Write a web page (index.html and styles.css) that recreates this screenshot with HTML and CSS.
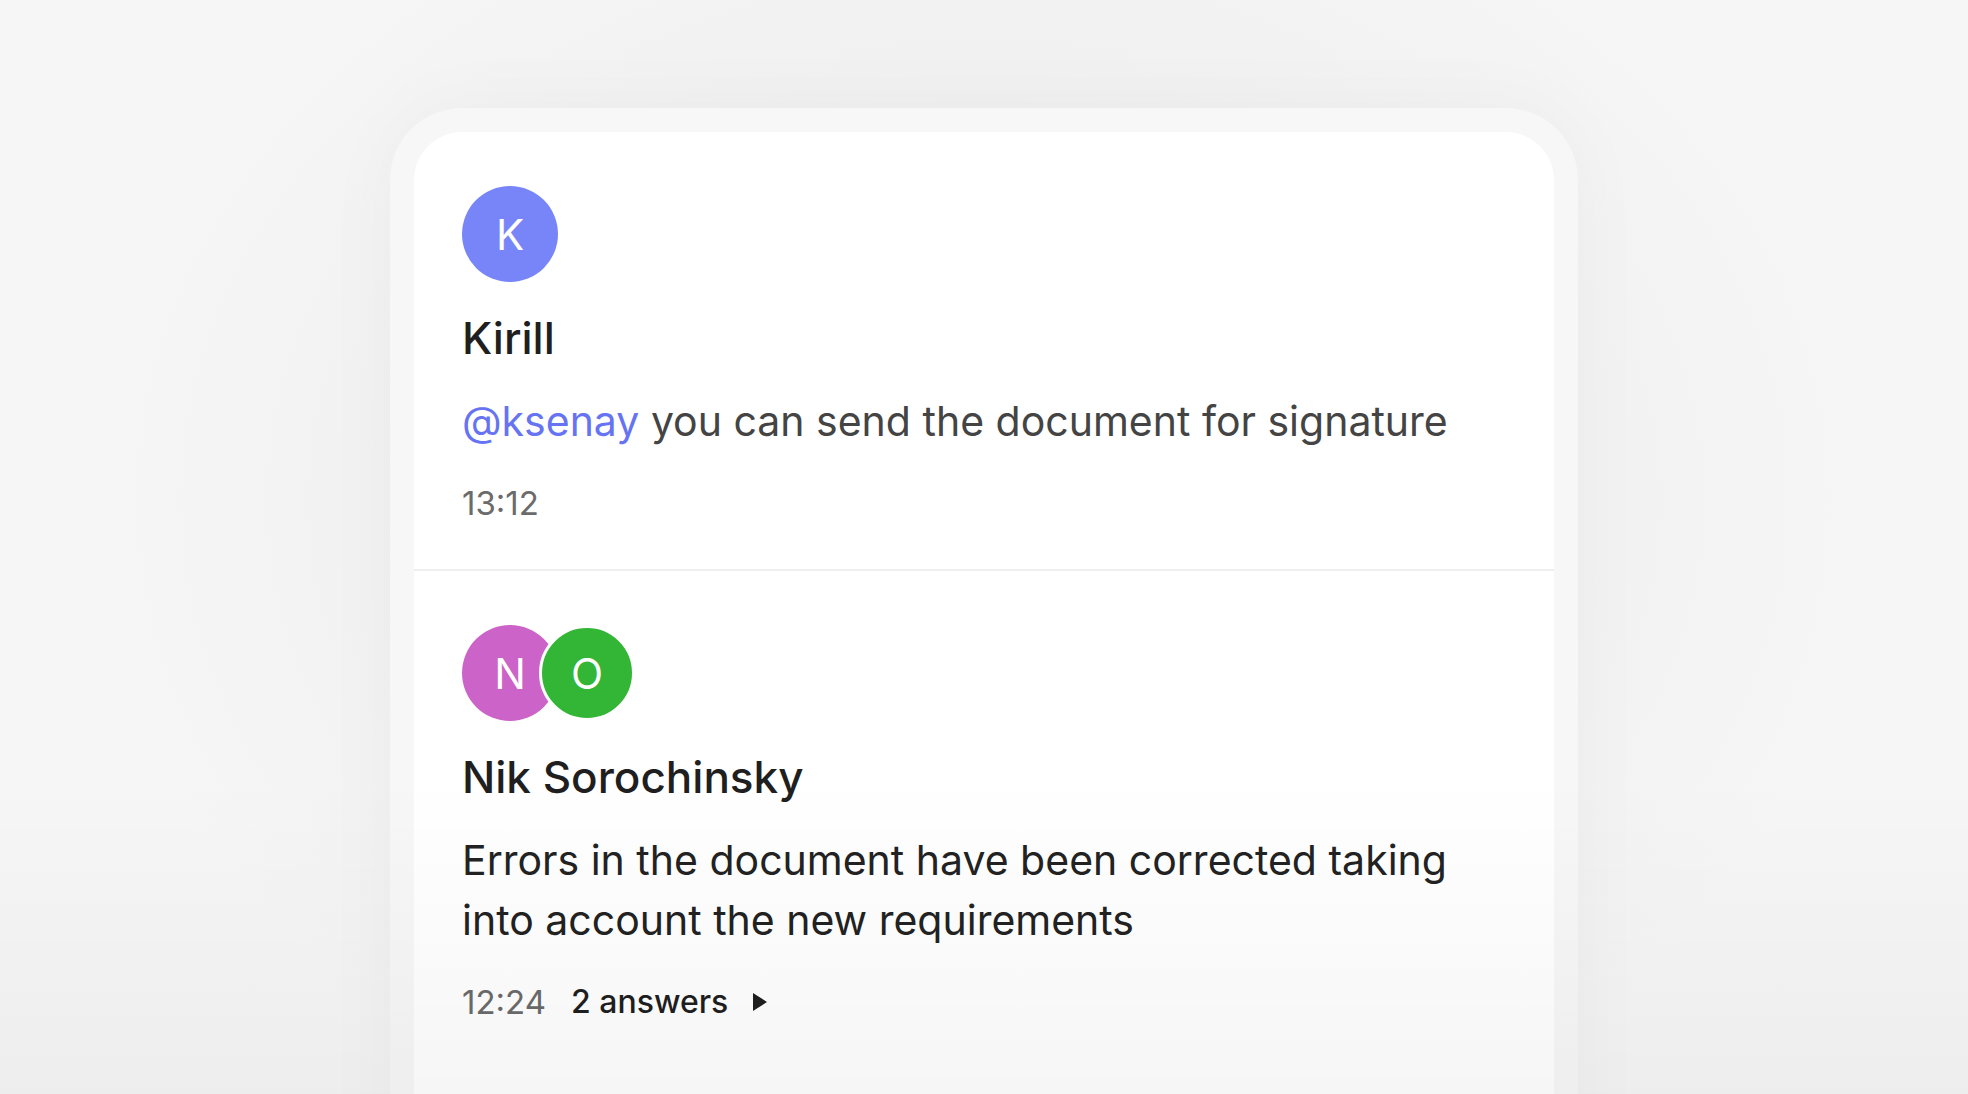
FILE: index.html
```html
<!DOCTYPE html>
<html lang="en">
<head>
<meta charset="utf-8">
<title>Comments</title>
<link rel="stylesheet" href="styles.css">
</head>
<body>
<div class="stage">
  <div class="frame">
    <div class="card">
      <div class="item">
        <div class="avatars">
          <div class="avatar avatar-k">K</div>
        </div>
        <div class="name">Kirill</div>
        <div class="message read"><span class="mention">@ksenay</span> you can send the document for signature</div>
        <div class="meta"><span class="time">13:12</span></div>
      </div>
      <div class="item">
        <div class="avatars">
          <div class="avatar avatar-n">N</div>
          <div class="avatar avatar-o">O</div>
        </div>
        <div class="name">Nik Sorochinsky</div>
        <div class="message">Errors in the document have been corrected taking<br>into account the new requirements</div>
        <div class="meta">
          <span class="time">12:24</span>
          <span class="answers">2 answers</span>
          <svg class="arrow" width="16" height="20" viewBox="0 0 16 20"><path d="M1 1 L15 10 L1 19 Z" fill="#1f1f1f"/></svg>
        </div>
      </div>
    </div>
  </div>
  <div class="fade"></div>
</div>
</body>
</html>
```

FILE: styles.css
```css
html, body {
  margin: 0;
  padding: 0;
  height: 100%;
}
body {
  overflow: hidden;
  background: #f3f3f3;
  font-family: Inter, "Noto Sans", sans-serif;
}
.stage {
  position: relative;
  height: 100vh;
  overflow: hidden;
  padding-top: 108px;
  box-sizing: border-box;
  background: radial-gradient(ellipse 900px 700px at 984px 500px, #ebebeb 0%, #f0f0f0 55%, #f6f6f6 100%);
}
.frame {
  width: 1188px;
  margin: 0 auto;
  box-sizing: border-box;
  padding: 24px 24px 0;
  background: #f7f7f7;
  border-radius: 72px 72px 0 0;
  height: 1100px;
  box-shadow: 0 0 80px rgba(0, 0, 0, 0.035);
}
.card {
  background: #ffffff;
  border-radius: 48px 48px 0 0;
  height: 100%;
}
.item {
  display: flex;
  flex-direction: column;
  align-items: flex-start;
  padding: 54px 48px 42px;
}
.item + .item {
  border-top: 2px solid #efefef;
}
.avatars {
  display: flex;
  height: 96px;
}
.avatar {
  width: 96px;
  height: 96px;
  border-radius: 50%;
  display: flex;
  align-items: center;
  justify-content: center;
  color: #ffffff;
  font-size: 42px;
  font-weight: 400;
  box-sizing: border-box;
}
.avatar-k { background: #7785f9; }
.avatar-n { background: #cb63c8; }
.avatar-o {
  background: #33b535;
  border: 3px solid #ffffff;
  margin-left: -19px;
}
.name {
  margin-top: 28px;
  font-size: 44px;
  line-height: 56px;
  font-weight: 500;
  color: #1f1f1f;
}
.message {
  margin-top: 25px;
  font-size: 41px;
  line-height: 60px;
  color: #222222;
}
.message.read { color: #444444; }
.mention { color: #6673f2; }
.meta {
  margin-top: 28px;
  display: flex;
  align-items: center;
  height: 48px;
}
.time {
  font-size: 33px;
  line-height: 48px;
  color: #6b6b6b;
}
.answers {
  margin-left: 25px;
  font-size: 32px;
  line-height: 48px;
  font-weight: 500;
  color: #1f1f1f;
}
.arrow {
  margin-left: 24px;
}
.fade {
  position: absolute;
  left: 0;
  right: 0;
  bottom: 0;
  height: 320px;
  background: linear-gradient(to bottom, rgba(0,0,0,0) 0%, rgba(0,0,0,0.035) 100%);
  pointer-events: none;
}
```
